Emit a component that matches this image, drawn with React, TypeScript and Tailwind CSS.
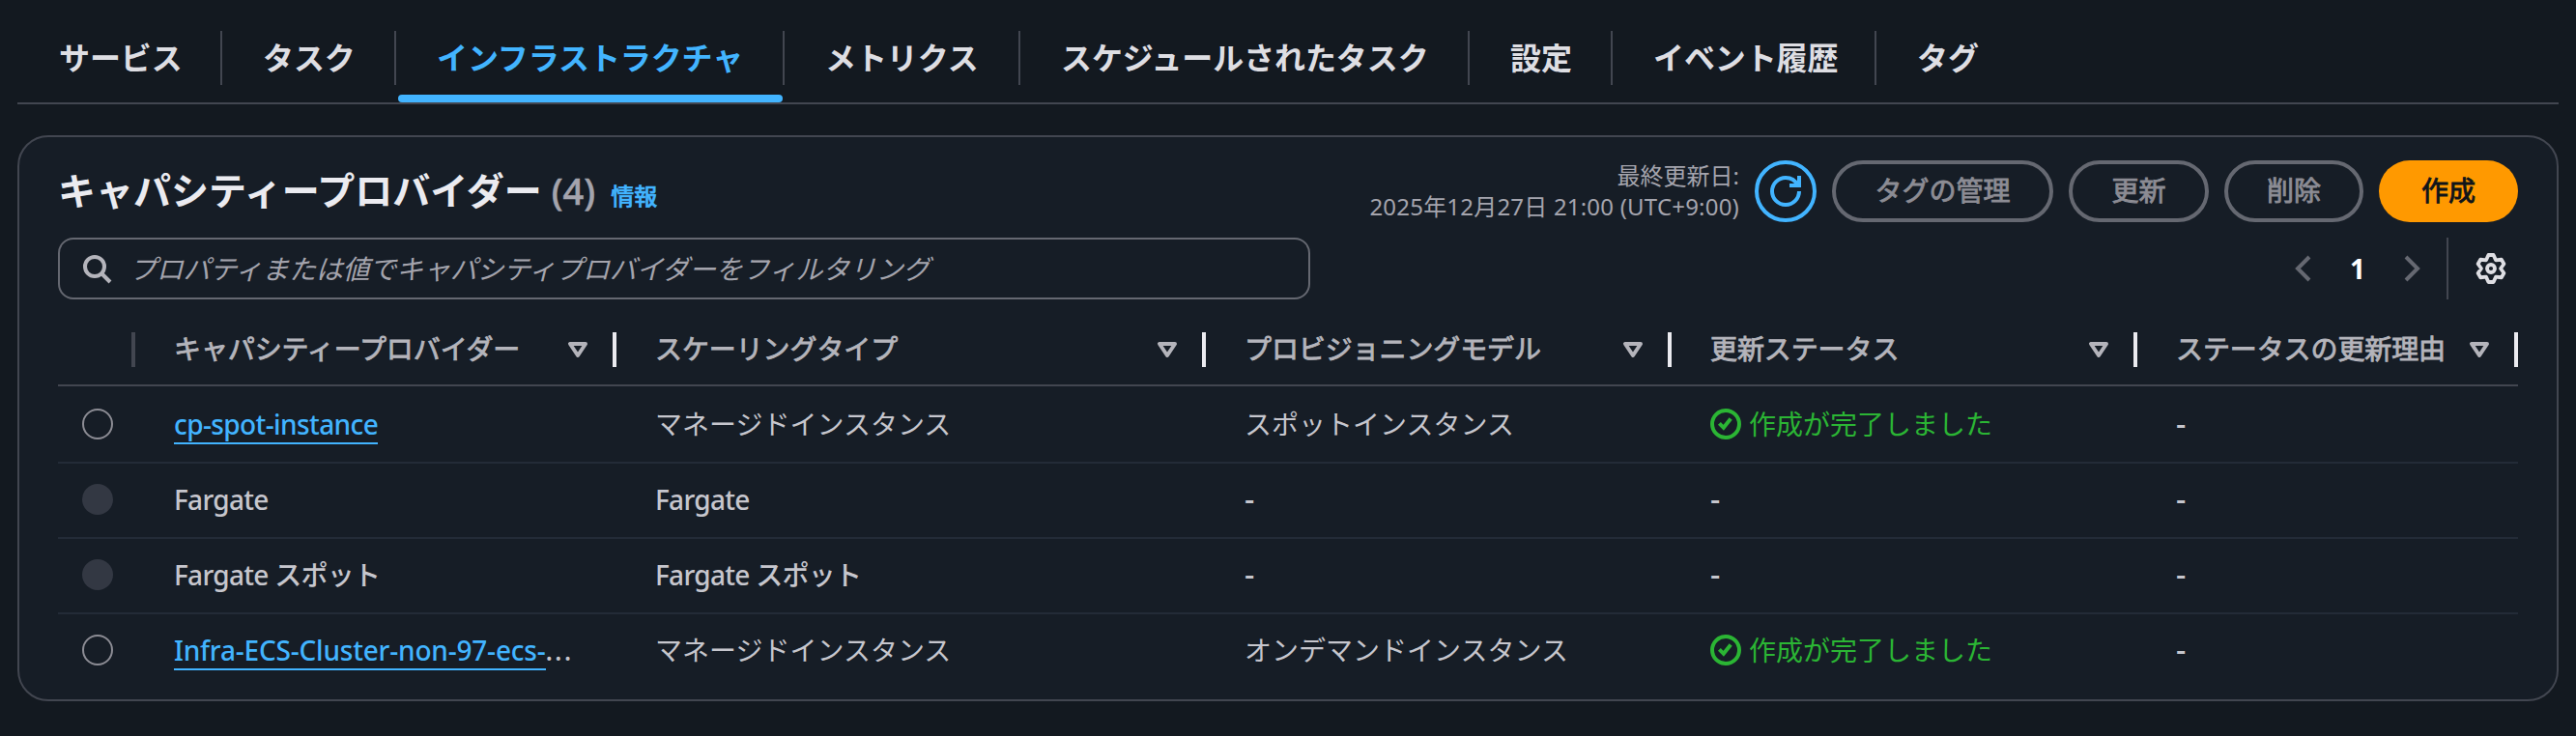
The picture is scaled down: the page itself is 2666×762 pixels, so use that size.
import React from "react";

const tabs = [
  { label: "サービス", width: "w-[212px]", pad: "pl-[43px]" },
  { label: "タスク", width: "w-[180px]", pad: "pl-[42px]" },
  { label: "インフラストラクチャ", width: "w-[402px]", pad: "pl-[42px]", active: true },
  { label: "メトリクス", width: "w-[244px]", pad: "pl-[42px]" },
  { label: "スケジュールされたタスク", width: "w-[465px]", pad: "pl-[42px]" },
  { label: "設定", width: "w-[148px]", pad: "pl-[42px]" },
  { label: "イベント履歴", width: "w-[273px]", pad: "pl-[42px]" },
  { label: "タグ", width: "w-[148px]", pad: "pl-[42px]" },
];

const columns = [
  "キャパシティープロバイダー",
  "スケーリングタイプ",
  "プロビジョニングモデル",
  "更新ステータス",
  "ステータスの更新理由",
];

type Row = {
  name: string;
  link?: boolean;
  truncated?: boolean;
  scaling: string;
  model: string;
  done?: boolean;
};

const rows: Row[] = [
  { name: "cp-spot-instance", link: true, scaling: "マネージドインスタンス", model: "スポットインスタンス", done: true },
  { name: "Fargate", scaling: "Fargate", model: "-" },
  { name: "Fargate スポット", scaling: "Fargate スポット", model: "-" },
  { name: "Infra-ECS-Cluster-non-97-ecs-", link: true, truncated: true, scaling: "マネージドインスタンス", model: "オンデマンドインスタンス", done: true },
];

const grid = "grid grid-cols-[80px_498px_610px_482px_482px_394px]";

const RefreshIcon = () => (
  <svg viewBox="0 0 16 16" className="h-8 w-8" fill="none" stroke="currentColor" strokeWidth="2">
    <path d="M15 8c0 3.87-3.13 7-7 7s-7-3.13-7-7 3.13-7 7-7c2.79 0 5.2 1.63 6.33 4" />
    <path d="M10 5h5V0" />
  </svg>
);

const SearchIcon = () => (
  <svg viewBox="0 0 16 16" className="h-8 w-8" fill="none" stroke="currentColor" strokeWidth="2">
    <circle cx="7" cy="7" r="5" />
    <path d="m15 15-4.5-4.5" />
  </svg>
);

const GearIcon = () => (
  <svg viewBox="0 0 16 16" className="h-8 w-8" fill="none" stroke="currentColor" strokeWidth="1.9" strokeLinejoin="round">
    <path d="M9.3 1 10.5 3.67 13.41 3.37 14.71 5.63 13 8 14.71 10.37 13.41 12.63 10.5 12.33 9.3 15H6.7L5.5 12.33 2.59 12.63 1.29 10.37 3 8 1.29 5.63 2.59 3.37 5.5 3.67 6.7 1Z" />
    <circle cx="8" cy="8" r="2" />
  </svg>
);

const CheckIcon = () => (
  <svg viewBox="0 0 16 16" className="h-8 w-8" fill="none" stroke="currentColor" strokeWidth="2">
    <circle cx="8" cy="8" r="7" />
    <path d="m4.7 7.7 2.2 2.2 3.7-4.6" />
  </svg>
);

const SortIcon = () => (
  <svg viewBox="0 0 16 16" className="h-8 w-8" fill="none" stroke="currentColor" strokeWidth="2" strokeLinejoin="round">
    <path d="M4 5h8l-4 6-4-6Z" />
  </svg>
);

const OutlineButton = ({ label, className }: { label: string; className: string }) => (
  <button
    className={`${className} h-16 rounded-full border-4 border-[#656871] pb-0.5 text-[28px] text-[#8c8c94] [-webkit-text-stroke:0.9px]`}
  >
    {label}
  </button>
);

const Dash = () => <span className="text-[32px] leading-9 font-medium">-</span>;

const App: React.FC = () => {
  return (
    <div className="h-[762px] w-[2666px] bg-[#131920] pt-8 font-['Noto_Sans','Noto_Sans_CJK_JP',sans-serif] text-[#c6c6cd]">
      <nav className="mx-[18px] flex h-[76px] border-b-2 border-[#424650] text-[32px] font-bold tracking-[-0.1px] text-[#dedee3]">
        {tabs.map((tab, index) => (
          <div key={tab.label} className={`${tab.width} flex shrink-0 flex-col justify-between`}>
            <div
              className={`${tab.pad} ${index < tabs.length - 1 ? "border-r-2 border-[#424650]" : ""} flex h-14 items-center whitespace-nowrap ${tab.active ? "text-[#42b4ff]" : ""}`}
            >
              {tab.label}
            </div>
            {tab.active && <div className="mx-0.5 h-2 rounded-full bg-[#42b4ff]" />}
          </div>
        ))}
      </nav>

      <section className="mx-[18px] mt-8 h-[586px] rounded-[32px] border-2 border-[#424650] bg-[#161d26] px-10 pt-6">
        <div className="flex h-16 items-center justify-between">
          <h2 className="flex items-baseline whitespace-nowrap pb-0.5 text-[39px] font-bold text-[#ebebf0]">
            キャパシティープロバイダー
            <span className="ml-2.5 text-[38px] font-medium text-[#a4a4ad] [-webkit-text-stroke:0.5px]">(4)</span>
            <a className="ml-4 text-[24px] font-medium text-[#42b4ff] [-webkit-text-stroke:0.6px]">情報</a>
          </h2>
          <div className="flex items-center">
            <div className="mr-4 text-right text-[24px] leading-8 text-[#a4a4ad]">
              <p>最終更新日:</p>
              <p className="tracking-[0.2px]">2025年12月27日 21:00 (UTC+9:00)</p>
            </div>
            <button className="mr-4 flex h-16 w-16 items-center justify-center rounded-full border-4 border-[#42b4ff] text-[#42b4ff]">
              <RefreshIcon />
            </button>
            <div className="flex gap-4">
              <OutlineButton label="タグの管理" className="w-[229px]" />
              <OutlineButton label="更新" className="w-[145px]" />
              <OutlineButton label="削除" className="w-36" />
              <button className="h-16 w-36 rounded-full bg-[#ff9900] pb-0.5 text-[28px] text-[#0f141a] [-webkit-text-stroke:0.9px]">
                作成
              </button>
            </div>
          </div>
        </div>

        <div className="mt-4 flex h-16 items-center justify-between">
          <div className="flex h-16 w-[1296px] items-center rounded-2xl border-2 border-[#656871] pl-[22px] text-[#b4b4bb]">
            <SearchIcon />
            <span className="ml-[18px] text-[28px] tracking-[-0.22px] text-[#a4a4ad] italic">
              プロパティまたは値でキャパシティプロバイダーをフィルタリング
            </span>
          </div>
          <div className="flex h-16 items-center">
            <svg viewBox="0 0 16 16" className="h-8 w-8 text-[#656871]" fill="none" stroke="currentColor" strokeWidth="2">
              <path d="M11 2 5 8l6 6" />
            </svg>
            <span className="w-20 text-center text-[28px] font-bold text-white">1</span>
            <svg viewBox="0 0 16 16" className="h-8 w-8 text-[#656871]" fill="none" stroke="currentColor" strokeWidth="2">
              <path d="m5 2 6 6-6 6" />
            </svg>
            <div className="ml-5 mr-7 h-16 w-0.5 bg-[#424650]" />
            <div className="mr-3 text-[#dedee3]">
              <GearIcon />
            </div>
          </div>
        </div>

        <div className="mt-4">
          <div
            className={`${grid} h-[74px] border-b-2 border-[#424650] text-[28px] tracking-[-0.1px] text-[#b4b4bb]`}
          >
            <div className="mt-[18px] h-9 border-r-4 border-[#424650]" />
            {columns.map((column) => (
              <div
                key={column}
                className="mt-[18px] flex h-9 items-center justify-between whitespace-nowrap border-r-4 border-[#ebebf0] pl-10 pr-5"
              >
                <span className="pb-0.5 [-webkit-text-stroke:0.9px]">{column}</span>
                <SortIcon />
              </div>
            ))}
          </div>
          {rows.map((row) => (
            <div
              key={row.name}
              className={`${grid} h-[78px] items-center border-b-2 border-[#232b37] pb-0.5 text-[28px] nth-2:h-20 nth-2:pb-0 last:h-[76px] last:border-b-0`}
            >
              <div
                className={`ml-[25px] h-8 w-8 rounded-full ${row.link ? "border-2 border-[#8c8c94]" : "bg-[#333843]"}`}
              />
              <div className="whitespace-nowrap pl-10 font-medium">
                {row.link ? (
                  <a
                    className={`border-b-2 border-[#42b4ff] text-[#42b4ff] ${row.truncated ? "tracking-[-0.2px]" : "tracking-[-0.6px]"}`}
                  >
                    {row.name}
                  </a>
                ) : (
                  <span className="tracking-[-0.7px]">{row.name}</span>
                )}
                {row.truncated && <span className="tracking-[2px]">...</span>}
              </div>
              <div className={`pl-10 ${row.link ? "" : "font-medium tracking-[-0.7px]"}`}>{row.scaling}</div>
              <div className="pl-10">{row.model === "-" ? <Dash /> : row.model}</div>
              <div className="pl-10">
                {row.done ? (
                  <span className="flex items-center gap-2 text-[#2bb534]">
                    <CheckIcon />
                    作成が完了しました
                  </span>
                ) : (
                  <Dash />
                )}
              </div>
              <div className="pl-10">
                <Dash />
              </div>
            </div>
          ))}
        </div>
      </section>
    </div>
  );
};

export default App;
